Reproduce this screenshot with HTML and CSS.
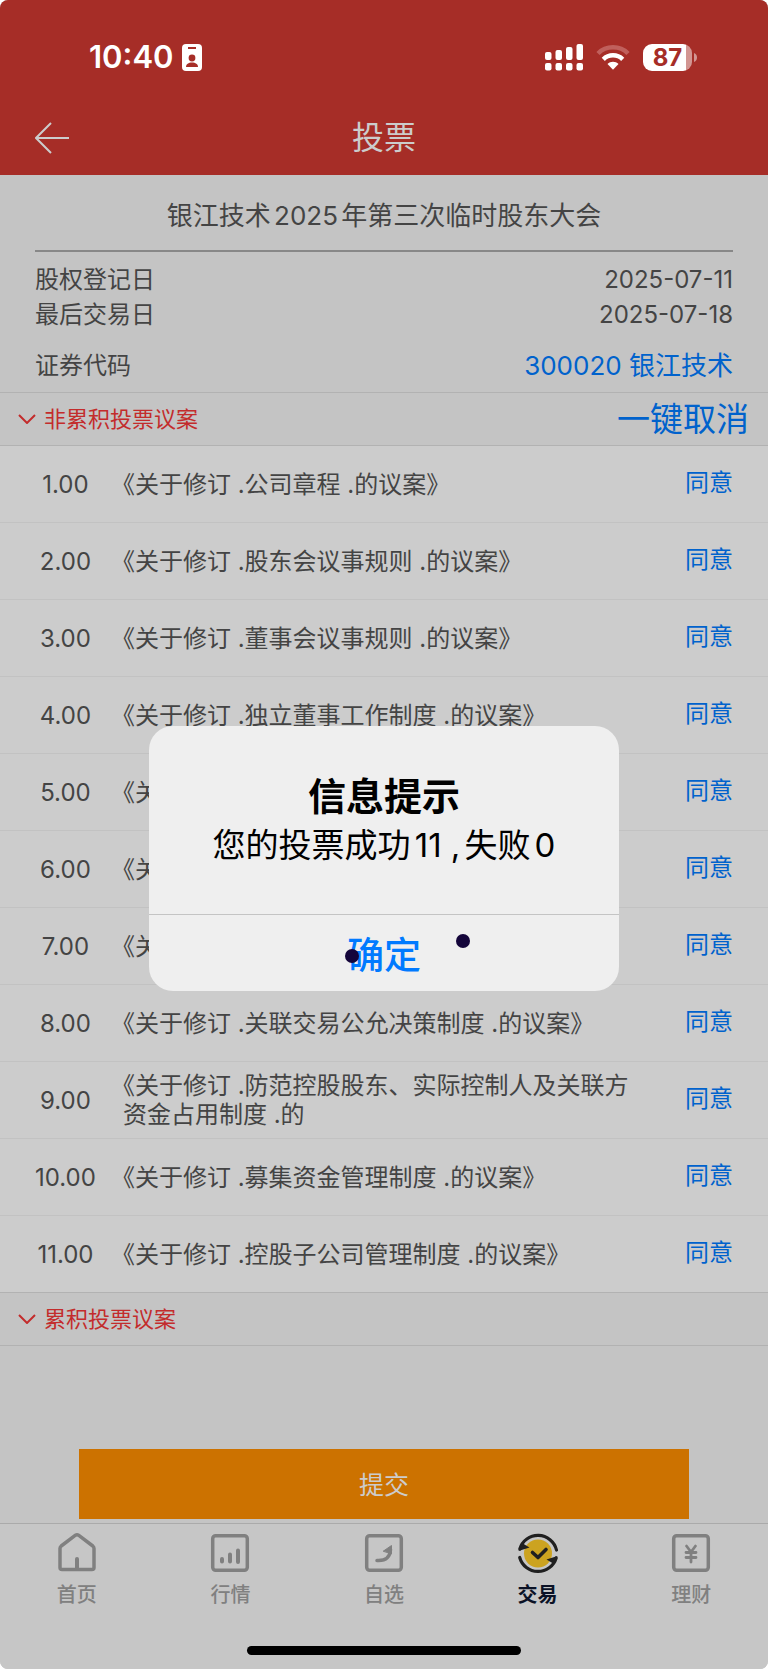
FILE: index.html
```html
<!DOCTYPE html>
<html lang="zh-CN">
<head>
    <meta charset="UTF-8">
    <meta name="viewport" content="width=device-width, initial-scale=1.0">
    <title>投票</title>
    <link rel="stylesheet" href="styles.css">
</head>
<body>
<div class="app">
    <header class="header">
        <div class="status-bar">
            <div class="status-left">
                <span class="time">10:40</span>
                <svg width="20" height="27" viewBox="0 0 20 27" aria-hidden="true">
                    <rect width="20" height="27" rx="4" fill="#fff"/>
                    <path d="M6 4h8" stroke="#a62d27" stroke-width="2"/>
                    <circle cx="10" cy="14" r="3.4" fill="#a62d27"/>
                    <path d="M4 23c0-3 2.500-4.500 6-4.500s6 1.500 6 4.500z" fill="#a62d27"/>
                </svg>
            </div>
            <div class="status-right">
                <svg width="38" height="27" viewBox="0 0 38 27" fill="#fff" aria-hidden="true">
                    <rect x="0" y="8" width="6.500" height="8" rx="2"/>
                    <rect x="10.500" y="6" width="6.500" height="10" rx="2"/>
                    <rect x="21" y="3" width="6.500" height="13" rx="2"/>
                    <rect x="31.500" y="0" width="6.500" height="16" rx="2"/>
                    <rect x="0" y="19" width="6.500" height="7.500" rx="2"/>
                    <rect x="10.500" y="19" width="6.500" height="7.500" rx="2"/>
                    <rect x="21" y="19" width="6.500" height="7.500" rx="2"/>
                    <rect x="31.500" y="19" width="6.500" height="7.500" rx="2"/>
                </svg>
                <svg class="wifi" width="34" height="25" viewBox="0 0 34 25" fill="none" aria-hidden="true">
                    <path d="M2 8.500C10 .300 24 .300 32 8.500" stroke="#c0605c" stroke-width="4.500"/>
                    <path d="M7.300 14.300c5.400-5.300 14-5.300 19.400 0" stroke="#fff" stroke-width="4.500"/>
                    <path d="M11.500 19c3-3 8-3 11 0L17 24.800z" fill="#fff"/>
                </svg>
                <div class="battery">
                    <span class="battery-level">87</span>
                    <svg class="battery-cap" width="3" height="9" viewBox="0 0 3 9" aria-hidden="true"><path d="M0 0c4 1.500 4 7.500 0 9z" fill="#d29592"/></svg>
                </div>
            </div>
        </div>
        <div class="nav-bar">
            <button class="back" type="button" aria-label="返回">
                <svg width="35" height="32" viewBox="0 0 35 32" fill="none" stroke="#ccc" stroke-width="2" aria-hidden="true">
                    <path d="M34 16H1M16 1L1 16l15 15"/>
                </svg>
            </button>
            <h1 class="nav-title">投票</h1>
        </div>
    </header>

    <main class="main">
        <section class="info">
            <h2 class="meeting">银江技术2025年第三次临时股东大会</h2>
            <dl class="details">
                <div class="detail"><dt>股权登记日</dt><dd>2025-07-11</dd></div>
                <div class="detail"><dt>最后交易日</dt><dd>2025-07-18</dd></div>
                <div class="detail security"><dt>证券代码</dt><dd><a href="#">300020 银江技术</a></dd></div>
            </dl>
        </section>

        <div class="section-bar">
            <button class="section-toggle" type="button">
                <svg width="18" height="10" viewBox="0 0 18 10" fill="none" stroke="#c32c2c" stroke-width="2" aria-hidden="true"><path d="M1 1l8 8 8-8"/></svg>
                非累积投票议案
            </button>
            <button class="cancel-all" type="button">一键取消</button>
        </div>

        <table class="proposals">
            <tr><td class="num">1.00</td><td class="name">《关于修订 .公司章程 .的议案》</td><td class="vote"><button type="button">同意</button></td></tr>
            <tr><td class="num">2.00</td><td class="name">《关于修订 .股东会议事规则 .的议案》</td><td class="vote"><button type="button">同意</button></td></tr>
            <tr><td class="num">3.00</td><td class="name">《关于修订 .董事会议事规则 .的议案》</td><td class="vote"><button type="button">同意</button></td></tr>
            <tr><td class="num">4.00</td><td class="name">《关于修订 .独立董事工作制度 .的议案》</td><td class="vote"><button type="button">同意</button></td></tr>
            <tr><td class="num">5.00</td><td class="name">《关</td><td class="vote"><button type="button">同意</button></td></tr>
            <tr><td class="num">6.00</td><td class="name">《关</td><td class="vote"><button type="button">同意</button></td></tr>
            <tr><td class="num">7.00</td><td class="name">《关</td><td class="vote"><button type="button">同意</button></td></tr>
            <tr><td class="num">8.00</td><td class="name">《关于修订 .关联交易公允决策制度 .的议案》</td><td class="vote"><button type="button">同意</button></td></tr>
            <tr><td class="num">9.00</td><td class="name">《关于修订 .防范控股股东、实际控制人及关联方资金占用制度 .的</td><td class="vote"><button type="button">同意</button></td></tr>
            <tr><td class="num">10.00</td><td class="name">《关于修订 .募集资金管理制度 .的议案》</td><td class="vote"><button type="button">同意</button></td></tr>
            <tr><td class="num">11.00</td><td class="name">《关于修订 .控股子公司管理制度 .的议案》</td><td class="vote"><button type="button">同意</button></td></tr>
        </table>

        <div class="section-bar">
            <button class="section-toggle" type="button">
                <svg width="18" height="10" viewBox="0 0 18 10" fill="none" stroke="#c32c2c" stroke-width="2" aria-hidden="true"><path d="M1 1l8 8 8-8"/></svg>
                累积投票议案
            </button>
        </div>

        <button class="submit" type="button">提交</button>
    </main>

    <footer class="footer">
        <nav class="tabs">
            <a class="tab" href="#">
                <svg width="42" height="42" viewBox="0 0 42 42" fill="none" stroke="#808080" stroke-width="3.500" stroke-linejoin="round" aria-hidden="true">
                    <path d="M4 16.500Q4 15 5.200 14L19.500 3.200Q21 2.200 22.500 3.200L36.800 14Q38 15 38 16.500V35.500Q38 37.500 36 37.500H6Q4 37.500 4 35.500z"/>
                    <path d="M21 37V27" stroke-width="4" stroke-linecap="round"/>
                </svg>
                首页
            </a>
            <a class="tab" href="#">
                <svg width="42" height="42" viewBox="0 0 42 42" fill="none" stroke="#808080" stroke-width="3.500" stroke-linecap="round" aria-hidden="true">
                    <rect x="3.700" y="3.700" width="34.600" height="34.600" rx="3"/>
                    <path d="M13 27v2.500M21 22.500v7M29 18.500V30" stroke-width="4"/>
                </svg>
                行情
            </a>
            <a class="tab" href="#">
                <svg width="42" height="42" viewBox="0 0 42 42" fill="none" stroke="#808080" stroke-width="3.500" stroke-linecap="round" aria-hidden="true">
                    <rect x="3.700" y="3.700" width="34.600" height="34.600" rx="3"/>
                    <path d="M14 28.500c8 .500 13-3 13.500-11"/>
                    <path d="M20.500 19l8-5.500v8z" fill="#808080" stroke-width="1" stroke-linejoin="round"/>
                </svg>
                自选
            </a>
            <a class="tab active" href="#">
                <svg width="42" height="42" viewBox="0 0 42 42" fill="none" stroke="#202020" stroke-width="3.200" aria-hidden="true">
                    <circle cx="21" cy="21.500" r="14" fill="#cca320" stroke="none"/>
                    <path d="M2.800 17A19 19 0 0 1 39.500 18" stroke-linecap="round"/>
                    <path d="M39.200 26A19 19 0 0 1 2.700 25.500" stroke-linecap="round"/>
                    <path d="M5 11l7.500 4.500L1.500 19z" fill="#202020" stroke="none"/>
                    <path d="M37 32l-7.500-4.500L40.500 24z" fill="#202020" stroke="none"/>
                    <path d="M15.500 20.500l5.500 5 8-8" stroke-width="3.600" stroke-linecap="round" stroke-linejoin="round"/>
                </svg>
                交易
            </a>
            <a class="tab" href="#">
                <svg width="42" height="42" viewBox="0 0 42 42" fill="none" stroke="#808080" stroke-width="3.500" aria-hidden="true">
                    <rect x="3.700" y="3.700" width="34.600" height="34.600" rx="3"/>
                    <path d="M16.500 14l4.500 6 4.500-6M21 20v10M16 20.500h10M16 25.500h10" stroke-width="2.800" stroke-linecap="round"/>
                </svg>
                理财
            </a>
        </nav>
        <div class="home-indicator"></div>
    </footer>

    <div class="overlay">
        <div class="alert" role="alertdialog" aria-labelledby="alertTitle" aria-describedby="alertText">
            <div class="alert-body">
                <h2 class="alert-title" id="alertTitle">信息提示</h2>
                <p class="alert-text" id="alertText">您的投票成功11 ,失败0</p>
            </div>
            <button class="alert-ok" type="button">确定</button>
            <span class="dot dot-left"></span>
            <span class="dot dot-right"></span>
        </div>
    </div>
</div>
</body>
</html>
```
FILE: styles.css
```css
* {
    box-sizing: border-box;
}
body {
    margin: 0;
    background: #fff;
    color: #444;
    font-family: Inter, "Noto Sans CJK SC", sans-serif;
    font-size: 24px;
    text-autospace: normal;
}
h1, h2, p, dl, dd {
    margin: 0;
    font-weight: 400;
}
button {
    padding: 0;
    border: none;
    background: none;
    font: inherit;
    color: inherit;
    cursor: pointer;
}
a {
    color: inherit;
    text-decoration: none;
}
svg {
    display: block;
}
.app {
    position: relative;
    display: flex;
    flex-direction: column;
    min-height: 100vh;
    border-radius: 8px;
    overflow: hidden;
    background: #c4c4c4;
}

/* Header */
.header {
    background: #a62d27;
    color: #fff;
}
.status-bar {
    display: flex;
    justify-content: space-between;
    align-items: center;
    height: 100px;
    padding: 14px 71px 0 89px;
}
.status-left {
    display: flex;
    align-items: center;
    gap: 8px;
}
.time {
    font-size: 31px;
    font-weight: 600;
    line-height: 32px;
}
.status-right {
    display: flex;
    align-items: center;
}
.wifi {
    margin: 0 13px;
}
.battery {
    display: flex;
    align-items: center;
    gap: 2px;
}
.battery-level {
    width: 49px;
    height: 27px;
    border-radius: 9px;
    background: linear-gradient(to right, #fff 87%, #d29592 87%);
    color: #a62d27;
    font-size: 24px;
    font-weight: 700;
    line-height: 27px;
    text-align: center;
}
.nav-bar {
    display: grid;
    grid-template-columns: 1fr auto 1fr;
    align-items: center;
    height: 75px;
    padding: 0 35px;
}
.back {
    justify-self: start;
}
.nav-title {
    color: #ccc;
    font-size: 32px;
    line-height: 40px;
}

/* Meeting info */
.main {
    flex: 1;
    display: flex;
    flex-direction: column;
}
.info {
    padding: 22px 35px 8px;
}
.meeting {
    padding-bottom: 15px;
    border-bottom: 2px solid #888;
    font-size: 26px;
    line-height: 38px;
    text-align: center;
}
.details {
    padding-top: 10px;
    line-height: 35px;
}
.detail {
    display: flex;
    justify-content: space-between;
}
.security {
    margin-top: 16px;
}
.security a {
    color: #0062cc;
    font-size: 26px;
}

/* Collapsible section titles */
.section-bar {
    display: flex;
    justify-content: space-between;
    align-items: center;
    height: 54px;
    padding: 0 19px 0 18px;
    border-top: 1px solid #b2b2b2;
    border-bottom: 1px solid #b2b2b2;
}
.section-toggle {
    display: flex;
    align-items: center;
    gap: 8px;
    color: #c32c2c;
    font-size: 22px;
    line-height: 32px;
}
.cancel-all {
    color: #0062cc;
    font-size: 33px;
    line-height: 40px;
}

/* Proposals */
.proposals {
    width: 100%;
    border-spacing: 0;
    background: #ccc;
    line-height: 29px;
}
.proposals td {
    height: 77px;
    padding: 0;
    border-bottom: 1px solid #c2c2c2;
}
.proposals tr:last-child td {
    height: 76px;
    border-bottom: none;
}
.proposals .num {
    width: 122px;
    padding: 0 27px 0 35px;
    text-align: center;
}
.proposals .name {
    text-autospace: no-autospace;
    text-spacing-trim: trim-start;
}
.proposals .vote {
    width: 120px;
    padding: 0 35px 4px 0;
    text-align: right;
}
.vote button {
    color: #0062cc;
    line-height: 29px;
}

.submit {
    height: 70px;
    margin: auto 79px 4px;
    padding-bottom: 3px;
    background: #cc7200;
    color: #ccc;
    font-size: 25px;
}

/* Bottom tabs */
.footer {
    padding-bottom: 14px;
    border-top: 1px solid #aaa;
    background: #c6c6c6;
}
.tabs {
    display: flex;
    padding-top: 8px;
}
.tab {
    flex: 1;
    display: flex;
    flex-direction: column;
    align-items: center;
    gap: 6px;
    color: #808080;
    font-size: 20px;
    font-weight: 500;
    line-height: 30px;
}
.tab.active {
    color: #0b1226;
    font-weight: 600;
}
.home-indicator {
    width: 274px;
    height: 9px;
    margin: 36px auto 0;
    border-radius: 5px;
    background: #000;
}

/* Alert */
.overlay {
    position: fixed;
    inset: 0;
    display: flex;
    justify-content: center;
    align-items: center;
    padding-top: 48px;
}
.alert {
    position: relative;
    width: 80%;
    max-width: 470px;
    border-radius: 24px;
    background: #efefef;
    color: #000;
    text-align: center;
}
.alert-body {
    padding: 45px 20px 44px;
    border-bottom: 1px solid #c4c4c4;
}
.alert-title {
    font-size: 38px;
    font-weight: 600;
    line-height: 50px;
}
.alert-text {
    font-size: 33px;
    line-height: 49px;
}
.alert-ok {
    width: 100%;
    height: 76px;
    color: #007aff;
    font-size: 37px;
    font-weight: 500;
}
/* Touch marks over the button */
.dot {
    position: absolute;
    width: 14px;
    height: 14px;
    border-radius: 50%;
    background: #14053a;
}
.dot-left {
    left: 196px;
    bottom: 28px;
}
.dot-right {
    left: 307px;
    bottom: 43px;
}
```
